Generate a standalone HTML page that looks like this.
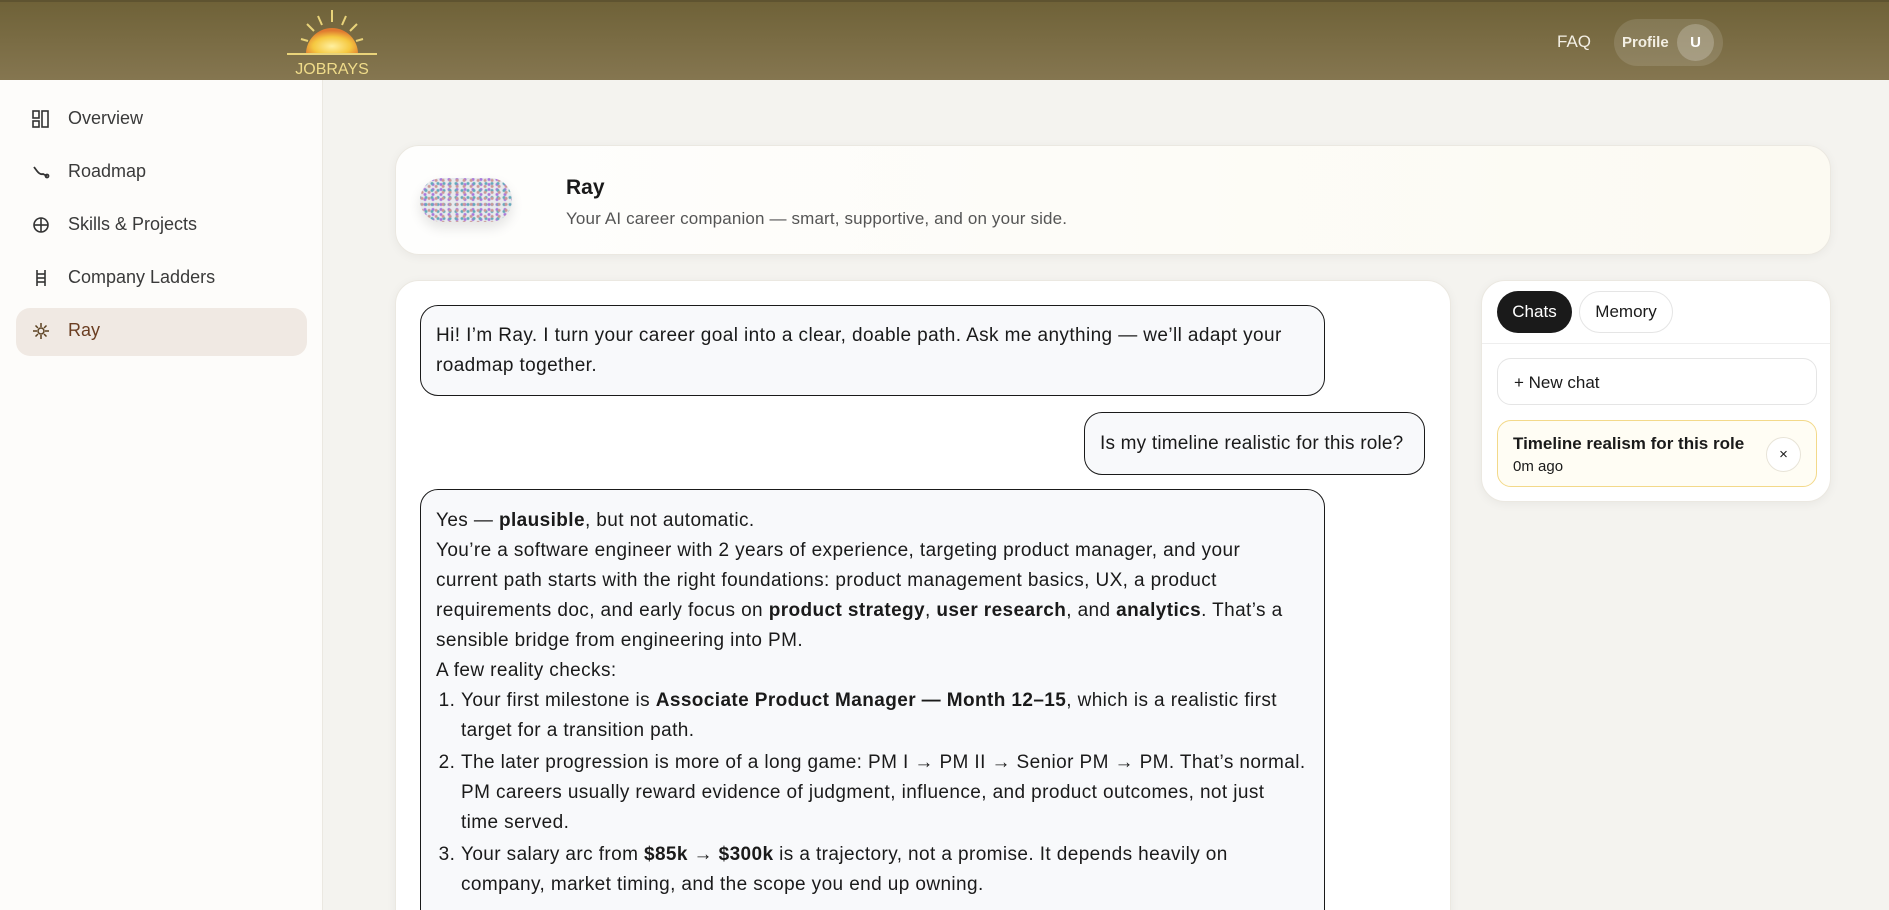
<!DOCTYPE html>
<html><head><meta charset="utf-8"><style>
*{box-sizing:border-box;margin:0;padding:0}
html,body{width:1889px;height:910px;overflow:hidden}
body{background:#f4f3ef;font-family:"Liberation Sans",sans-serif;color:#1a1a1a;position:relative}
.hdr{position:absolute;left:0;top:0;width:1889px;height:80px;background:linear-gradient(#6f6238,#857650);border-top:2px solid #5e5330}
.side{position:absolute;left:0;top:80px;width:323px;height:830px;background:#fdfcfa;border-right:1px solid #ebe8e1}
.nav{position:absolute;left:32px;font-size:18px;color:#3a3a3a;display:flex;align-items:center}
.nav svg{margin-right:18px}
.card{position:absolute;background:#fff;border-radius:24px;box-shadow:0 2px 10px rgba(0,0,0,.05);border:1px solid #ebe8e1}
.bub{position:absolute;border:1.3px solid #1a1a1a;border-radius:18px;background:#f8f9fb;font-size:19px;line-height:30px;padding:0 15px;white-space:nowrap;letter-spacing:0.4px}
ol{padding-left:25px}
</style></head><body>
<div class="hdr">
<svg style="position:absolute;left:285px;top:4px" width="94" height="72" viewBox="0 0 94 72">
<defs><radialGradient id="s" cx="50%" cy="70%" r="60%"><stop offset="0" stop-color="#fff0a0"/><stop offset=".6" stop-color="#f5c840"/><stop offset="1" stop-color="#e07a30"/></radialGradient></defs>
<path d="M21 48 A26 26 0 0 1 73 48Z" fill="url(#s)"/>
<g stroke="#e9d37a" stroke-width="2"><line x1="47" y1="4" x2="47" y2="16"/><line x1="33" y1="10" x2="37" y2="19"/><line x1="61" y1="10" x2="57" y2="19"/><line x1="22" y1="18" x2="29" y2="25"/><line x1="72" y1="18" x2="65" y2="25"/><line x1="16" y1="33" x2="23" y2="35"/><line x1="78" y1="33" x2="71" y2="35"/><line x1="2" y1="48" x2="92" y2="48"/></g>
<text x="47" y="68" text-anchor="middle" font-family="Liberation Sans" font-size="16" fill="#f0dc8a">JOBRAYS</text></svg>
<div style="position:absolute;left:1557px;top:30px;color:#f3efe4;font-size:17px">FAQ</div>
<div style="position:absolute;left:1614px;top:17px;width:109px;height:47px;border-radius:24px;background:rgba(255,255,255,.12)">
<span style="position:absolute;left:8px;top:15px;color:#f3efe4;font-size:15px;font-weight:bold">Profile</span>
<div style="position:absolute;left:63px;top:5px;width:37px;height:37px;border-radius:50%;background:rgba(255,255,255,.22);color:#fff;font-weight:bold;font-size:15px;text-align:center;line-height:37px">U</div></div>
</div>
<div class="side">
<div class="nav" style="top:28px"><svg width="18" height="18" viewBox="0 0 18 18" fill="none" stroke="#333" stroke-width="1.6"><rect x="1" y="1" width="6" height="7"/><rect x="1" y="11" width="6" height="6"/><rect x="10" y="1" width="6" height="16"/></svg>Overview</div>
<div class="nav" style="top:81px"><svg width="18" height="18" viewBox="0 0 18 18" fill="none" stroke="#333" stroke-width="1.8"><path d="M2 4 L5 8 Q8 12 11 11 L15 13"/><circle cx="15" cy="13" r="1.5"/></svg>Roadmap</div>
<div class="nav" style="top:134px"><svg width="18" height="18" viewBox="0 0 18 18" fill="none" stroke="#333" stroke-width="1.6"><circle cx="9" cy="9" r="7"/><line x1="2" y1="9" x2="16" y2="9"/><line x1="9" y1="2" x2="9" y2="16"/></svg>Skills &amp; Projects</div>
<div class="nav" style="top:187px"><svg width="18" height="18" viewBox="0 0 18 18" fill="none" stroke="#333" stroke-width="1.6"><line x1="5" y1="1" x2="5" y2="17"/><line x1="13" y1="1" x2="13" y2="17"/><line x1="5" y1="5" x2="13" y2="5"/><line x1="5" y1="9" x2="13" y2="9"/><line x1="5" y1="13" x2="13" y2="13"/></svg>Company Ladders</div>
<div style="position:absolute;left:16px;top:228px;width:291px;height:48px;border-radius:14px;background:#f0e9e3"></div>
<div class="nav" style="top:240px;color:#6b3e22"><svg width="18" height="18" viewBox="0 0 18 18" fill="none" stroke="#5a4020" stroke-width="1.5"><circle cx="9" cy="9" r="3"/><path d="M9 1v4M9 13v4M1 9h4M13 9h4M3.5 3.5l2.5 2.5M12 12l2.5 2.5M3.5 14.5l2.5-2.5M12 6l2.5-2.5"/></svg>Ray</div>
</div>
<div class="card" style="left:395px;top:145px;width:1436px;height:110px;background:linear-gradient(90deg,#fefefd,#fcfaf2)">
<div style="position:absolute;left:24px;top:32px;width:92px;height:44px;border-radius:22px;background:radial-gradient(circle at 30% 40%,#c99 1px,transparent 2px) 0 0/7px 6px,radial-gradient(circle,#6ab 1px,transparent 2px) 3px 2px/6px 7px,radial-gradient(circle,#a7d 1px,transparent 2px) 1px 4px/8px 5px,#e8eaec;box-shadow:0 6px 12px rgba(0,0,0,.1)"></div>
<div style="position:absolute;left:170px;top:30px;font-size:21px;font-weight:bold">Ray</div>
<div style="position:absolute;left:170px;top:63px;font-size:17px;letter-spacing:0.15px;color:#555">Your AI career companion — smart, supportive, and on your side.</div>
</div>
<div class="card" style="left:395px;top:280px;width:1056px;height:660px"></div>
<div class="bub" style="left:420px;top:305px;width:905px;height:91px;padding-top:15px">Hi! I’m Ray. I turn your career goal into a clear, doable path. Ask me anything — we’ll adapt your<br>roadmap together.</div>
<div class="bub" style="left:1084px;top:412px;width:341px;height:63px;padding-top:16px;letter-spacing:0.2px">Is my timeline realistic for this role?</div>
<div class="bub" style="left:420px;top:489px;width:905px;height:460px;padding-top:16px">Yes — <b>plausible</b>, but not automatic.<br>You’re a software engineer with 2 years of experience, targeting product manager, and your<br>current path starts with the right foundations: product management basics, UX, a product<br>requirements doc, and early focus on <b>product strategy</b>, <b>user research</b>, and <b>analytics</b>. That’s a<br>sensible bridge from engineering into PM.<br>A few reality checks:
<ol><li>Your first milestone is <b>Associate Product Manager — Month 12–15</b>, which is a realistic first<br>target for a transition path.</li>
<li style="margin-top:2px">The later progression is more of a long game: PM I → PM II → Senior PM → PM. That’s normal.<br>PM careers usually reward evidence of judgment, influence, and product outcomes, not just<br>time served.</li>
<li style="margin-top:2px">Your salary arc from <b>$85k → $300k</b> is a trajectory, not a promise. It depends heavily on<br>company, market timing, and the scope you end up owning.</li></ol></div>
<div class="card" style="left:1481px;top:280px;width:350px;height:222px">
<div style="position:absolute;left:15px;top:10px;width:75px;height:42px;border-radius:21px;background:#1a1a1a;color:#fff;font-size:17px;text-align:center;line-height:42px">Chats</div>
<div style="position:absolute;left:97px;top:10px;width:94px;height:42px;border-radius:21px;border:1px solid #e5e5e5;font-size:17px;text-align:center;line-height:40px">Memory</div>
<div style="position:absolute;left:0;top:62px;width:348px;border-top:1px solid #eee"></div>
<div style="position:absolute;left:15px;top:77px;width:320px;height:47px;border-radius:14px;border:1px solid #e5e5e5;font-size:17px;padding:14px 16px">+ New chat</div>
<div style="position:absolute;left:15px;top:139px;width:320px;height:67px;border-radius:14px;border:1.5px solid #f3d98a;background:#fffdf4">
<div style="position:absolute;left:15px;top:13px;font-size:17px;font-weight:bold">Timeline realism for this role</div>
<div style="position:absolute;left:15px;top:37px;font-size:15px">0m ago</div>
<div style="position:absolute;left:268px;top:16px;width:35px;height:35px;border-radius:50%;border:1px solid #e8e4d8;background:#fff;text-align:center;line-height:33px;font-size:15px">×</div>
</div></div>
</body></html>
